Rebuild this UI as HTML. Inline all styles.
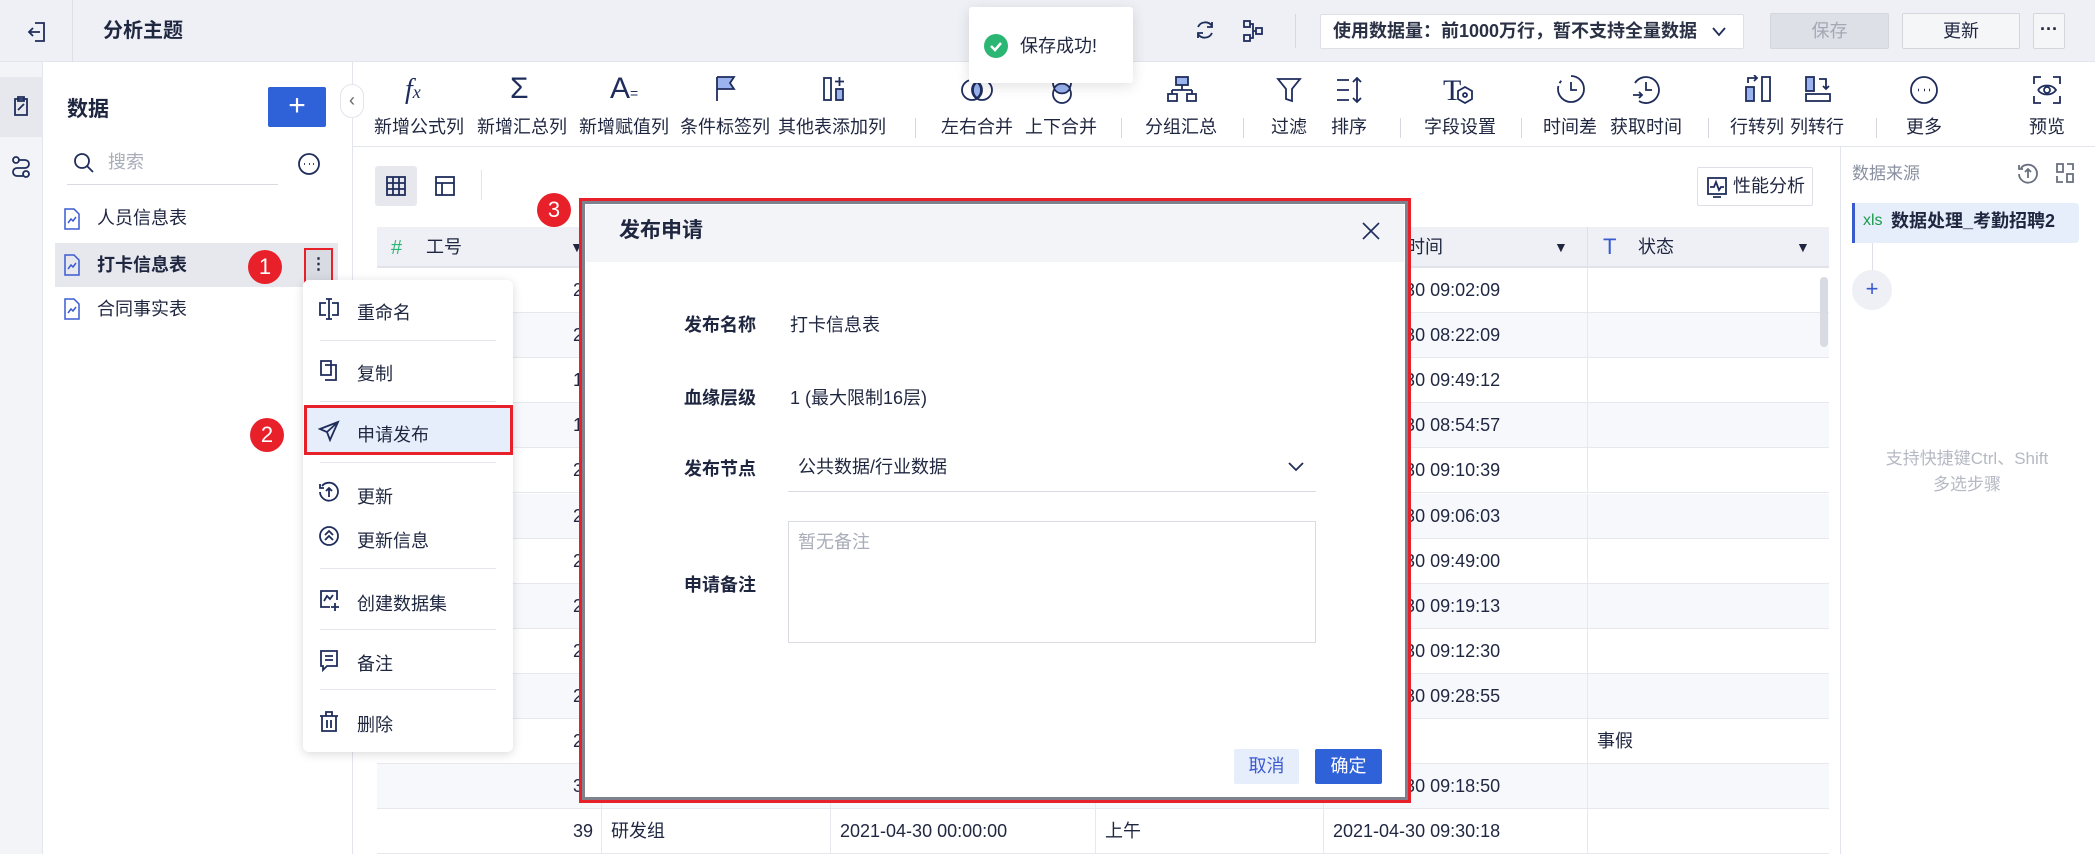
<!DOCTYPE html>
<html><head><meta charset="utf-8">
<style>
*{box-sizing:border-box;margin:0;padding:0}
body{width:2095px;height:854px;overflow:hidden;position:relative;background:#fff;font-family:"Liberation Sans","Noto Sans CJK SC",sans-serif;color:#1f2640;font-size:18px}
.a{position:absolute}
.t{position:absolute;white-space:nowrap;line-height:1}
svg{position:absolute;fill:none;stroke:#1f2d5c;stroke-width:1.8}
.tb{position:absolute;top:113px;font-size:18px;transform:translateX(-50%);white-space:nowrap}
.vd{position:absolute;top:118px;width:1px;height:20px;background:#d5d8e0}
.badge{position:absolute;width:34px;height:34px;border-radius:50%;background:#e8202a;color:#fff;font-size:22px;text-align:center;line-height:34px}
.row{position:absolute;left:377px;width:1452px;height:45px;border-bottom:1px solid #e6e8ee}
.cell{position:absolute;top:0;height:45px;line-height:45px;font-size:18px}
.mi{position:absolute;left:357px;font-size:18px}
.md{position:absolute;left:320px;width:176px;height:1px;background:#e4e6ec}
</style></head><body>
<!-- top bar -->
<div class="a" style="left:0;top:0;width:2095px;height:62px;background:#eef0f5;border-bottom:1px solid #e2e5eb"></div>
<svg style="left:26px;top:20px" width="22" height="24" viewBox="0 0 22 24"><path d="M9 3h9v18H9M14 12H3M7 8l-4 4 4 4"/></svg>
<div class="a" style="left:72px;top:0;width:1px;height:62px;background:#dde0e6"></div>
<div class="t" style="left:103px;top:21px;font-size:20px;font-weight:bold">分析主题</div>
<svg style="left:1193px;top:18px" width="24" height="24" viewBox="0 0 24 24"><path d="M19 8A8 8 0 0 0 5 9M5 16a8 8 0 0 0 14-1M19 4v5h-5M5 20v-5h5"/></svg>
<svg style="left:1241px;top:18px" width="24" height="26" viewBox="0 0 24 26"><rect x="3" y="3" width="6" height="6"/><rect x="3" y="17" width="6" height="6"/><rect x="15" y="10" width="6" height="6"/><path d="M9 6h3v14H9M12 13h3"/></svg>
<div class="a" style="left:1295px;top:14px;width:1px;height:34px;background:#d5d8e0"></div>
<div class="a" style="left:1320px;top:14px;width:424px;height:35px;background:#fff;border:1px solid #dde0e6;border-radius:2px"></div>
<div class="t" style="left:1333px;top:22px;font-size:18px;font-weight:bold;color:#2a3145">使用数据量：前1000万行，暂不支持全量数据</div>
<svg style="left:1710px;top:22px" width="18" height="18" viewBox="0 0 18 18"><path d="M3 6l6 7 6-7"/></svg>
<div class="a" style="left:1770px;top:13px;width:119px;height:36px;background:#dde0e6;border:1px solid #d3d6dd;border-radius:2px;color:#a3a8b5;text-align:center;line-height:34px">保存</div>
<div class="a" style="left:1902px;top:13px;width:118px;height:36px;background:#f5f6f8;border:1px solid #d3d6dd;border-radius:2px;text-align:center;line-height:34px">更新</div>
<div class="a" style="left:2033px;top:13px;width:32px;height:36px;background:#f5f6f8;border:1px solid #d3d6dd;border-radius:2px;text-align:center;line-height:30px;font-weight:bold">···</div>
<!-- left strip -->
<div class="a" style="left:0;top:62px;width:43px;height:792px;background:#f3f4f7;border-right:1px solid #e2e5eb"></div>
<div class="a" style="left:0;top:77px;width:43px;height:60px;background:#e6e8ee"></div>
<svg style="left:10px;top:95px" width="22" height="24" viewBox="0 0 22 24"><path d="M5 4h12v16H5zM8 2h6v4H8zM8 15l6-6"/></svg>
<svg style="left:10px;top:155px" width="22" height="24" viewBox="0 0 22 24"><circle cx="6" cy="5" r="3"/><circle cx="16" cy="19" r="3"/><path d="M9 5h6a4 4 0 0 1 0 8H7a4 4 0 0 0 0 8h6"/></svg>
<!-- side panel -->
<div class="a" style="left:352px;top:62px;width:1px;height:792px;background:#e2e5eb"></div>
<div class="t" style="left:67px;top:99px;font-size:21px;font-weight:bold">数据</div>
<div class="a" style="left:268px;top:87px;width:58px;height:40px;background:#2f62d8;border-radius:2px;color:#fff;font-size:30px;text-align:center;line-height:38px">+</div>
<div class="a" style="left:340px;top:84px;width:24px;height:34px;border:1px solid #e2e5eb;border-radius:12px;background:#fff;color:#666;text-align:center;line-height:30px;font-size:18px">‹</div>
<svg style="left:72px;top:151px" width="24" height="24" viewBox="0 0 24 24"><circle cx="10" cy="10" r="7"/><path d="M15 15l6 6"/></svg>
<div class="t" style="left:108px;top:153px;color:#a8adb9">搜索</div>
<div class="a" style="left:67px;top:184px;width:211px;height:1px;background:#d8dbe2"></div>
<svg style="left:297px;top:152px" width="24" height="24" viewBox="0 0 24 24"><circle cx="12" cy="12" r="10"/><path d="M7 12h1M12 12h1M16 12h1"/></svg>
<div class="a" style="left:55px;top:243px;width:283px;height:44px;background:#e6e8ee"></div>
<svg style="left:63px;top:208px;stroke:#3a5bd0;stroke-width:1.5" width="18" height="22" viewBox="0 0 18 22"><path d="M2 1h9l5 5v15H2zM5 15l3-4 2 2 3-4"/></svg>
<div class="t" style="left:97px;top:209px">人员信息表</div>
<svg style="left:63px;top:254px;stroke:#3a5bd0;stroke-width:1.5" width="18" height="22" viewBox="0 0 18 22"><path d="M2 1h9l5 5v15H2zM5 15l3-4 2 2 3-4"/></svg>
<div class="t" style="left:97px;top:256px;font-weight:bold">打卡信息表</div>
<svg style="left:63px;top:298px;stroke:#3a5bd0;stroke-width:1.5" width="18" height="22" viewBox="0 0 18 22"><path d="M2 1h9l5 5v15H2zM5 15l3-4 2 2 3-4"/></svg>
<div class="t" style="left:97px;top:300px">合同事实表</div>
<div class="badge" style="left:248px;top:250px">1</div>
<div class="a" style="left:304px;top:248px;width:29px;height:35px;border:2px solid #e8202a;background:#d8dbe2;text-align:center;line-height:30px;font-weight:bold;font-size:16px">⋮</div>
<!-- toolbar -->
<div class="a" style="left:353px;top:146px;width:1742px;height:1px;background:#e2e5eb"></div>
<div class="t" style="left:405px;top:76px;font-size:28px;font-style:italic;font-family:'Liberation Serif',serif;color:#1f2d5c">f<span style="font-size:18px">x</span></div>
<div class="t" style="left:510px;top:74px;font-size:30px;color:#1f2d5c">Σ</div>
<div class="t" style="left:610px;top:74px;font-size:30px;color:#1f2d5c">A<span style="font-size:14px">=</span></div>
<svg style="left:714px;top:75px" width="24" height="28" viewBox="0 0 24 28"><path d="M3 2v24M3 2h17l-4 6 4 6H3" style="fill:#9bb3ee"/></svg>
<svg style="left:822px;top:75px" width="24" height="28" viewBox="0 0 24 28"><rect x="2" y="3" width="7" height="22"/><rect x="14" y="14" width="7" height="11" style="fill:#9bb3ee"/><path d="M17.5 2v9M13 6.5h9"/></svg>
<svg style="left:960px;top:76px" width="34" height="28" viewBox="0 0 34 28"><circle cx="12" cy="14" r="10"/><circle cx="22" cy="14" r="10"/><path d="M17 6a10 10 0 0 1 0 16a10 10 0 0 1 0-16" style="fill:#9bb3ee"/></svg>
<svg style="left:1048px;top:72px" width="28" height="34" viewBox="0 0 28 34"><circle cx="14" cy="11" r="9"/><circle cx="14" cy="22" r="9"/><path d="M6 16.5a9 9 0 0 1 16 0a9 9 0 0 1-16 0" style="fill:#9bb3ee"/></svg>
<svg style="left:1167px;top:75px" width="30" height="28" viewBox="0 0 30 28"><rect x="9" y="2" width="12" height="8" style="fill:#9bb3ee"/><path d="M15 10v5M5 15h20M5 15v4M25 15v4"/><rect x="1" y="19" width="9" height="7"/><rect x="20" y="19" width="9" height="7"/></svg>
<svg style="left:1275px;top:76px" width="28" height="28" viewBox="0 0 28 28"><path d="M3 3h22l-8 10v12l-6-2V13z"/></svg>
<svg style="left:1335px;top:76px" width="30" height="28" viewBox="0 0 30 28"><path d="M2 4h12M2 14h12M2 24h12M22 2v24M18 6l4-4 4 4M18 22l4 4 4-4"/></svg>
<div class="t" style="left:1443px;top:76px;font-size:30px;color:#1f2d5c;font-family:'Liberation Serif',serif">T</div>
<svg style="left:1457px;top:86px" width="16" height="18" viewBox="0 0 16 18"><path d="M8 1l7 4v8l-7 4-7-4V5z"/><circle cx="8" cy="9" r="2"/></svg>
<svg style="left:1556px;top:74px" width="30" height="30" viewBox="0 0 30 30"><path d="M15 2a13 13 0 1 1-13 13" /><path d="M2 15a13 13 0 0 1 4-9" stroke-dasharray="3 3"/><path d="M15 8v8h6"/></svg>
<svg style="left:1631px;top:74px" width="30" height="30" viewBox="0 0 30 30"><path d="M4 9a13 13 0 1 1 4 18"/><path d="M15 8v8h6M2 21h9M8 18l3 3-3 3"/></svg>
<svg style="left:1743px;top:75px" width="30" height="28" viewBox="0 0 30 28"><rect x="3" y="12" width="8" height="14" style="fill:#9bb3ee"/><rect x="19" y="2" width="8" height="24"/><path d="M5 8V3h9M11 0l3 3-3 3"/></svg>
<svg style="left:1803px;top:75px" width="30" height="28" viewBox="0 0 30 28"><rect x="3" y="2" width="8" height="14" style="fill:#9bb3ee"/><rect x="3" y="19" width="24" height="7"/><path d="M16 4h7v10M20 11l3 3 3-3"/></svg>
<svg style="left:1909px;top:75px" width="30" height="30" viewBox="0 0 30 30"><circle cx="15" cy="15" r="13"/><path d="M9 15h1M15 15h1M20 15h1" stroke-width="2.5"/></svg>
<svg style="left:2032px;top:75px" width="30" height="30" viewBox="0 0 30 30"><path d="M2 9V2h7M21 2h7v7M28 21v7h-7M9 28H2v-7M6 15c4-6 14-6 18 0c-4 6-14 6-18 0"/><circle cx="15" cy="15" r="3"/></svg>
<div class="tb" style="left:419px">新增公式列</div>
<div class="tb" style="left:522px">新增汇总列</div>
<div class="tb" style="left:624px">新增赋值列</div>
<div class="tb" style="left:725px">条件标签列</div>
<div class="tb" style="left:832px">其他表添加列</div>
<div class="vd" style="left:915px"></div>
<div class="tb" style="left:977px">左右合并</div>
<div class="tb" style="left:1061px">上下合并</div>
<div class="vd" style="left:1121px"></div>
<div class="tb" style="left:1181px">分组汇总</div>
<div class="vd" style="left:1243px"></div>
<div class="tb" style="left:1289px">过滤</div>
<div class="tb" style="left:1349px">排序</div>
<div class="vd" style="left:1400px"></div>
<div class="tb" style="left:1460px">字段设置</div>
<div class="vd" style="left:1521px"></div>
<div class="tb" style="left:1570px">时间差</div>
<div class="tb" style="left:1646px">获取时间</div>
<div class="vd" style="left:1708px"></div>
<div class="tb" style="left:1757px">行转列</div>
<div class="tb" style="left:1817px">列转行</div>
<div class="vd" style="left:1876px"></div>
<div class="tb" style="left:1924px">更多</div>
<div class="tb" style="left:2047px">预览</div>
<!-- view toggles -->
<div class="a" style="left:375px;top:166px;width:42px;height:40px;background:#e6e8ee;border-radius:3px"></div>
<svg style="left:385px;top:175px" width="22" height="22" viewBox="0 0 22 22"><rect x="2" y="2" width="18" height="18"/><path d="M2 8h18M2 14h18M8 2v18M14 2v18"/></svg>
<svg style="left:434px;top:175px" width="22" height="22" viewBox="0 0 22 22"><rect x="2" y="2" width="18" height="18"/><path d="M2 8h18M8 8v12"/></svg>
<div class="a" style="left:481px;top:170px;width:1px;height:30px;background:#e2e5eb"></div>
<div class="a" style="left:1697px;top:167px;width:116px;height:39px;border:1px solid #dde0e6;border-radius:2px;background:#fff"></div>
<svg style="left:1706px;top:176px" width="22" height="22" viewBox="0 0 22 22"><rect x="2" y="2" width="18" height="16"/><path d="M4 11h4l2-5 3 8 2-3h3M7 21h8"/></svg>
<div class="t" style="left:1733px;top:177px">性能分析</div>
<!-- table -->
<div class="a" style="left:377px;top:227px;width:1452px;height:41px;background:#eef0f5;border-bottom:2px solid #e0e3ea"></div>
<div class="t" style="left:391px;top:238px;color:#2bb673;font-size:20px">#</div>
<div class="t" style="left:426px;top:238px">工号</div>
<div class="t" style="left:570px;top:240px;font-size:14px">▼</div>
<div class="t" style="left:1407px;top:238px">时间</div>
<div class="t" style="left:1554px;top:240px;font-size:14px">▼</div>
<div class="a" style="left:1587px;top:227px;width:1px;height:41px;background:#dde0e6"></div>
<div class="t" style="left:1603px;top:236px;color:#3a5bd0;font-size:22px">T</div>
<div class="t" style="left:1638px;top:238px">状态</div>
<div class="t" style="left:1796px;top:240px;font-size:14px">▼</div>
<div id="rows"></div>
<div class="a" style="left:1820px;top:277px;width:8px;height:70px;background:#d8dbe2;border-radius:4px"></div>
<!-- context menu -->
<div class="a" style="left:303px;top:280px;width:210px;height:472px;background:#fff;border-radius:6px;box-shadow:0 2px 10px rgba(0,0,0,.15)"></div>
<svg style="left:318px;top:297px" width="22" height="24" viewBox="0 0 22 24"><path d="M8 6H2v12h6M14 6h6v12h-6M11 2v20M8 2h6M8 22h6"/></svg>
<div class="mi" style="top:299px">重命名</div>
<div class="md" style="top:340px"></div>
<svg style="left:318px;top:358px" width="22" height="24" viewBox="0 0 22 24"><path d="M3 3h10v14H3zM7 7h11v15H7"/></svg>
<div class="mi" style="top:360px">复制</div>
<div class="md" style="top:401px"></div>
<div class="a" style="left:304px;top:405px;width:209px;height:50px;background:#e6eefc;border:3px solid #e8202a"></div>
<svg style="left:318px;top:420px" width="22" height="22" viewBox="0 0 22 22"><path d="M20 2L2 9l7 3 3 8zM9 12l11-10"/></svg>
<div class="mi" style="top:421px">申请发布</div>
<div class="md" style="top:462px"></div>
<div class="badge" style="left:250px;top:418px">2</div>
<svg style="left:318px;top:481px" width="22" height="22" viewBox="0 0 22 22"><path d="M4 5a9 9 0 1 1-2 6M2 3v4h4M11 16V7M8 10l3-3 3 3"/></svg>
<div class="mi" style="top:483px">更新</div>
<svg style="left:318px;top:525px" width="22" height="22" viewBox="0 0 22 22"><circle cx="11" cy="11" r="9"/><path d="M7 10l4-4 4 4M7 15l4-4 4 4"/></svg>
<div class="mi" style="top:527px">更新信息</div>
<div class="md" style="top:568px"></div>
<svg style="left:318px;top:588px" width="22" height="24" viewBox="0 0 22 24"><path d="M12 19H3V3h16v9M6 13l3-5 3 3 3-4M17 15v8M13 19h8"/></svg>
<div class="mi" style="top:590px">创建数据集</div>
<div class="md" style="top:629px"></div>
<svg style="left:318px;top:648px" width="22" height="24" viewBox="0 0 22 24"><path d="M3 3h16v15H9l-4 4v-4H3zM7 8h8M7 12h8"/></svg>
<div class="mi" style="top:650px">备注</div>
<div class="md" style="top:689px"></div>
<svg style="left:318px;top:709px" width="22" height="24" viewBox="0 0 22 24"><path d="M2 7h18M8 7V3h6v4M4 7v15h14V7M9 11v8M13 11v8"/></svg>
<div class="mi" style="top:711px">删除</div>
<!-- right panel -->
<div class="a" style="left:1840px;top:147px;width:1px;height:707px;background:#e2e5eb"></div>
<div class="t" style="left:1852px;top:165px;color:#8a90a0;font-size:17px">数据来源</div>
<svg style="left:2017px;top:162px;stroke:#6a7080" width="22" height="22" viewBox="0 0 22 22"><path d="M4 6a9 9 0 1 1-2 6M2 3v4h4M11 16V7M8 10l3-3 3 3"/></svg>
<svg style="left:2055px;top:162px;stroke:#6a7080" width="20" height="22" viewBox="0 0 20 22"><rect x="2" y="2" width="6" height="8"/><rect x="12" y="12" width="6" height="8"/><path d="M12 2h6v6M2 14v6h6"/></svg>
<div class="a" style="left:1852px;top:203px;width:227px;height:40px;background:#e6eefc;border-left:3px solid #3a5bd0;border-radius:0 4px 4px 0"></div>
<div class="t" style="left:1863px;top:213px;color:#1a9b4a;font-size:16px">xls</div>
<div class="t" style="left:1891px;top:212px;font-weight:bold;font-size:18px">数据处理_考勤招聘2</div>
<div class="a" style="left:1872px;top:243px;width:1px;height:28px;background:#dde0e6"></div>
<div class="a" style="left:1852px;top:270px;width:40px;height:40px;border-radius:50%;background:#eef0f5;text-align:center;line-height:38px;font-size:22px;color:#3a5bd0">+</div>
<div class="t" style="left:1967px;top:450px;transform:translateX(-50%);color:#b5b9c4;font-size:17px">支持快捷键Ctrl、Shift</div>
<div class="t" style="left:1967px;top:476px;transform:translateX(-50%);color:#b5b9c4;font-size:17px">多选步骤</div>
<!-- modal -->
<div class="a" style="left:579px;top:198px;width:832px;height:605px;border:3px solid #e8202a;background:#7d828e;padding:3px"><div style="width:100%;height:100%;background:#fff"></div></div>
<div class="a" style="left:586px;top:205px;width:818px;height:57px;background:#f3f4f7"></div>
<div class="t" style="left:619px;top:220px;font-size:21px;font-weight:bold">发布申请</div>
<svg style="left:1360px;top:220px;stroke-width:1.6" width="22" height="22" viewBox="0 0 22 22"><path d="M3 3l16 16M19 3L3 19"/></svg>
<div class="badge" style="left:537px;top:193px">3</div>
<div class="t" style="left:684px;top:316px;font-weight:bold">发布名称</div>
<div class="t" style="left:790px;top:316px">打卡信息表</div>
<div class="t" style="left:684px;top:389px;font-weight:bold">血缘层级</div>
<div class="t" style="left:790px;top:389px">1 (最大限制16层)</div>
<div class="t" style="left:684px;top:460px;font-weight:bold">发布节点</div>
<div class="t" style="left:798px;top:458px">公共数据/行业数据</div>
<svg style="left:1286px;top:458px" width="20" height="18" viewBox="0 0 20 18"><path d="M3 5l7 7 7-7"/></svg>
<div class="a" style="left:788px;top:491px;width:528px;height:1px;background:#d8dbe2"></div>
<div class="a" style="left:788px;top:521px;width:528px;height:122px;border:1px solid #d8dbe2"></div>
<div class="t" style="left:798px;top:533px;color:#a8adb9">暂无备注</div>
<div class="t" style="left:684px;top:576px;font-weight:bold">申请备注</div>
<div class="a" style="left:1234px;top:749px;width:65px;height:35px;background:#e6eefc;border-radius:2px;color:#3a5bd0;text-align:center;line-height:35px">取消</div>
<div class="a" style="left:1315px;top:749px;width:67px;height:35px;background:#2f62d8;border-radius:2px;color:#fff;text-align:center;line-height:35px">确定</div>
<!-- toast -->
<div class="a" style="left:969px;top:7px;width:164px;height:76px;background:#fff;border-radius:3px;box-shadow:0 3px 14px rgba(0,0,0,.12)"></div>
<div class="a" style="left:984px;top:34px;width:24px;height:24px;border-radius:50%;background:#2bb673"></div>
<svg style="left:984px;top:34px;stroke:#fff;stroke-width:2.5" width="24" height="24" viewBox="0 0 24 24"><path d="M7 12l4 4 6-7"/></svg>
<div class="t" style="left:1020px;top:37px">保存成功!</div>
<script>
var vals=["27","27","18","19","26","26","28","26","26","26","28","30","39"];
var times=["09:02:09","08:22:09","09:49:12","08:54:57","09:10:39","09:06:03","09:49:00","09:19:13","09:12:30","09:28:55","","09:18:50","09:30:18"];
var h="";
for(var i=0;i<13;i++){
 var ty=268+i*45.1;
 var bg=(i%2==1)?"#f7f8fc":"#fff";
 h+='<div class="row" style="top:'+ty+'px;background:'+bg+'">';
 h+='<div class="cell" style="left:0;width:224px;text-align:right;padding-right:8px">'+vals[i]+'</div>';
 [224,453,718,946,1210].forEach(function(x){h+='<div class="a" style="left:'+x+'px;top:0;width:1px;height:45px;background:#e6e8ee"></div>';});
 if(i==12){h+='<div class="cell" style="left:234px">研发组</div><div class="cell" style="left:463px">2021-04-30 00:00:00</div><div class="cell" style="left:728px">上午</div>';}
 if(times[i])h+='<div class="cell" style="left:956px">2021-04-30 '+times[i]+'</div>';
 if(i==10)h+='<div class="cell" style="left:1220px">事假</div>';
 h+='</div>';
}
document.getElementById("rows").innerHTML=h;
</script>
</body></html>
